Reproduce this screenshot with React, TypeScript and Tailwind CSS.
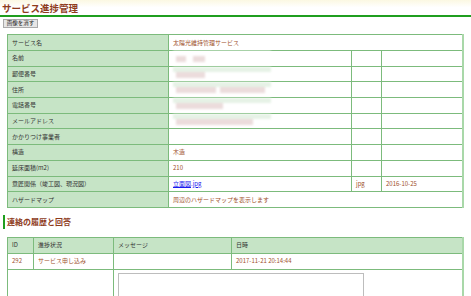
import React from "react";

const cell = "border border-[#7cbb7c] px-[4px] align-middle";
const label = `${cell} bg-[#c6e4c6] text-[#333]`;
const value = `${cell} bg-white text-[#a0522d]`;

function Blur({ stripe, blocks }: { stripe: boolean; blocks: [number, number][] }) {
  return (
    <div className="flex flex-col w-[98px] h-full blur-[1px]">
      <div className={`h-[5px] ${stripe ? "bg-[#e6f2e6]" : "bg-white"}`} />
      <div className="flex h-[6px] pl-[3px]">
        {blocks.map(([w, gap], i) => (
          <div key={i} className="h-full bg-[#ecdcdc]" style={{ width: w, marginRight: gap }} />
        ))}
      </div>
    </div>
  );
}

const rows: { name: string; v?: React.ReactNode; blur?: { stripe: boolean; blocks: [number, number][] } }[] = [
  { name: "名前", blur: { stripe: false, blocks: [[10, 7], [12, 0]] } },
  { name: "郵便番号", blur: { stripe: true, blocks: [[29, 0]] } },
  { name: "住所", blur: { stripe: true, blocks: [[40, 4], [45, 0]] } },
  { name: "電話番号", blur: { stripe: true, blocks: [[47, 0]] } },
  { name: "メールアドレス", blur: { stripe: true, blocks: [[77, 0]] } },
  { name: "かかりつけ事業者" },
  { name: "構造", v: "木造" },
  { name: "延床面積(m2)", v: "210" },
];

export default function App() {
  return (
    <div className="w-[471px] h-[296px] overflow-hidden bg-white font-['Noto_Sans_CJK_JP','Liberation_Sans',sans-serif]">
      <div className="h-[17px] bg-gradient-to-b from-[#fbf8e2] via-white to-white border-b-2 border-[#1f9e1f] pl-[2px] pt-[2px]">
        <h1 className="text-[9.5px] leading-[12px] font-bold text-[#8e3b1c]">サービス進捗管理</h1>
      </div>
      <button className="ml-[3px] mt-[2px] w-[35px] h-[9px] flex items-center justify-center bg-[#e6e6e6] border border-[#aaa] text-[5.5px] leading-none text-[#222]">
        画像を消す
      </button>

      <table className="ml-[7px] mt-[6px] w-[455px] border-collapse table-fixed text-[6px] leading-none border-r-2 border-r-[#a9d8a9]">
        <colgroup>
          <col className="w-[161px]" />
          <col className="w-[183px]" />
          <col className="w-[30px]" />
          <col className="w-[81px]" />
        </colgroup>
        <tbody>
          <tr className="h-[16px]">
            <td className={label}>サービス名</td>
            <td className={value} colSpan={3}>太陽光維持管理サービス</td>
          </tr>
          {rows.map((r) => (
            <tr key={r.name} className="h-[15.7px]">
              <td className={label}>{r.name}</td>
              {r.blur ? (
                <td className={`${cell} bg-white p-0 align-top`}>
                  <Blur stripe={r.blur.stripe} blocks={r.blur.blocks} />
                </td>
              ) : (
                <td className={value}>{r.v}</td>
              )}
              <td className={value} />
              <td className={value} />
            </tr>
          ))}
          <tr className="h-[15.7px]">
            <td className={label}>意匠関係（竣工図、現況図）</td>
            <td className={value}>
              <a href="#" className="text-[#1a1aee] underline whitespace-nowrap">立面図.jpg</a>
            </td>
            <td className={value}>jpg</td>
            <td className={value}>2016-10-25</td>
          </tr>
          <tr className="h-[15.7px]">
            <td className={label}>ハザードマップ</td>
            <td className={`${value} text-[#333]`} colSpan={3}>周辺のハザードマップを表示します</td>
          </tr>
        </tbody>
      </table>

      <div className="mt-[7px] ml-[3px] flex items-center gap-[2px] h-[14px]">
        <div className="w-[2px] h-full bg-[#1f9e1f]" />
        <h2 className="text-[8px] leading-none font-bold text-[#8e3b1c]">連絡の履歴と回答</h2>
      </div>

      <table className="ml-[7px] mt-[8px] w-[455px] border-collapse table-fixed text-[6px] leading-none border-r-2 border-r-[#a9d8a9]">
        <colgroup>
          <col className="w-[26px]" />
          <col className="w-[80px]" />
          <col className="w-[118px]" />
          <col className="w-[231px]" />
        </colgroup>
        <tbody>
          <tr className="h-[16px]">
            <td className={label}>ID</td>
            <td className={label}>進捗状況</td>
            <td className={label}>メッセージ</td>
            <td className={label}>日時</td>
          </tr>
          <tr className="h-[16px]">
            <td className={value}>292</td>
            <td className={value}>サービス申し込み</td>
            <td className={value} />
            <td className={value}>2017-11-21 20:14:44</td>
          </tr>
          <tr className="h-[40px]">
            <td className={`${cell} bg-white`} colSpan={2} />
            <td className={`${cell} bg-white align-top pt-[3px] px-[3px]`} colSpan={2}>
              <div className="w-[246px] h-[40px] border border-[#bdbdbd] bg-white" />
            </td>
          </tr>
        </tbody>
      </table>
    </div>
  );
}
